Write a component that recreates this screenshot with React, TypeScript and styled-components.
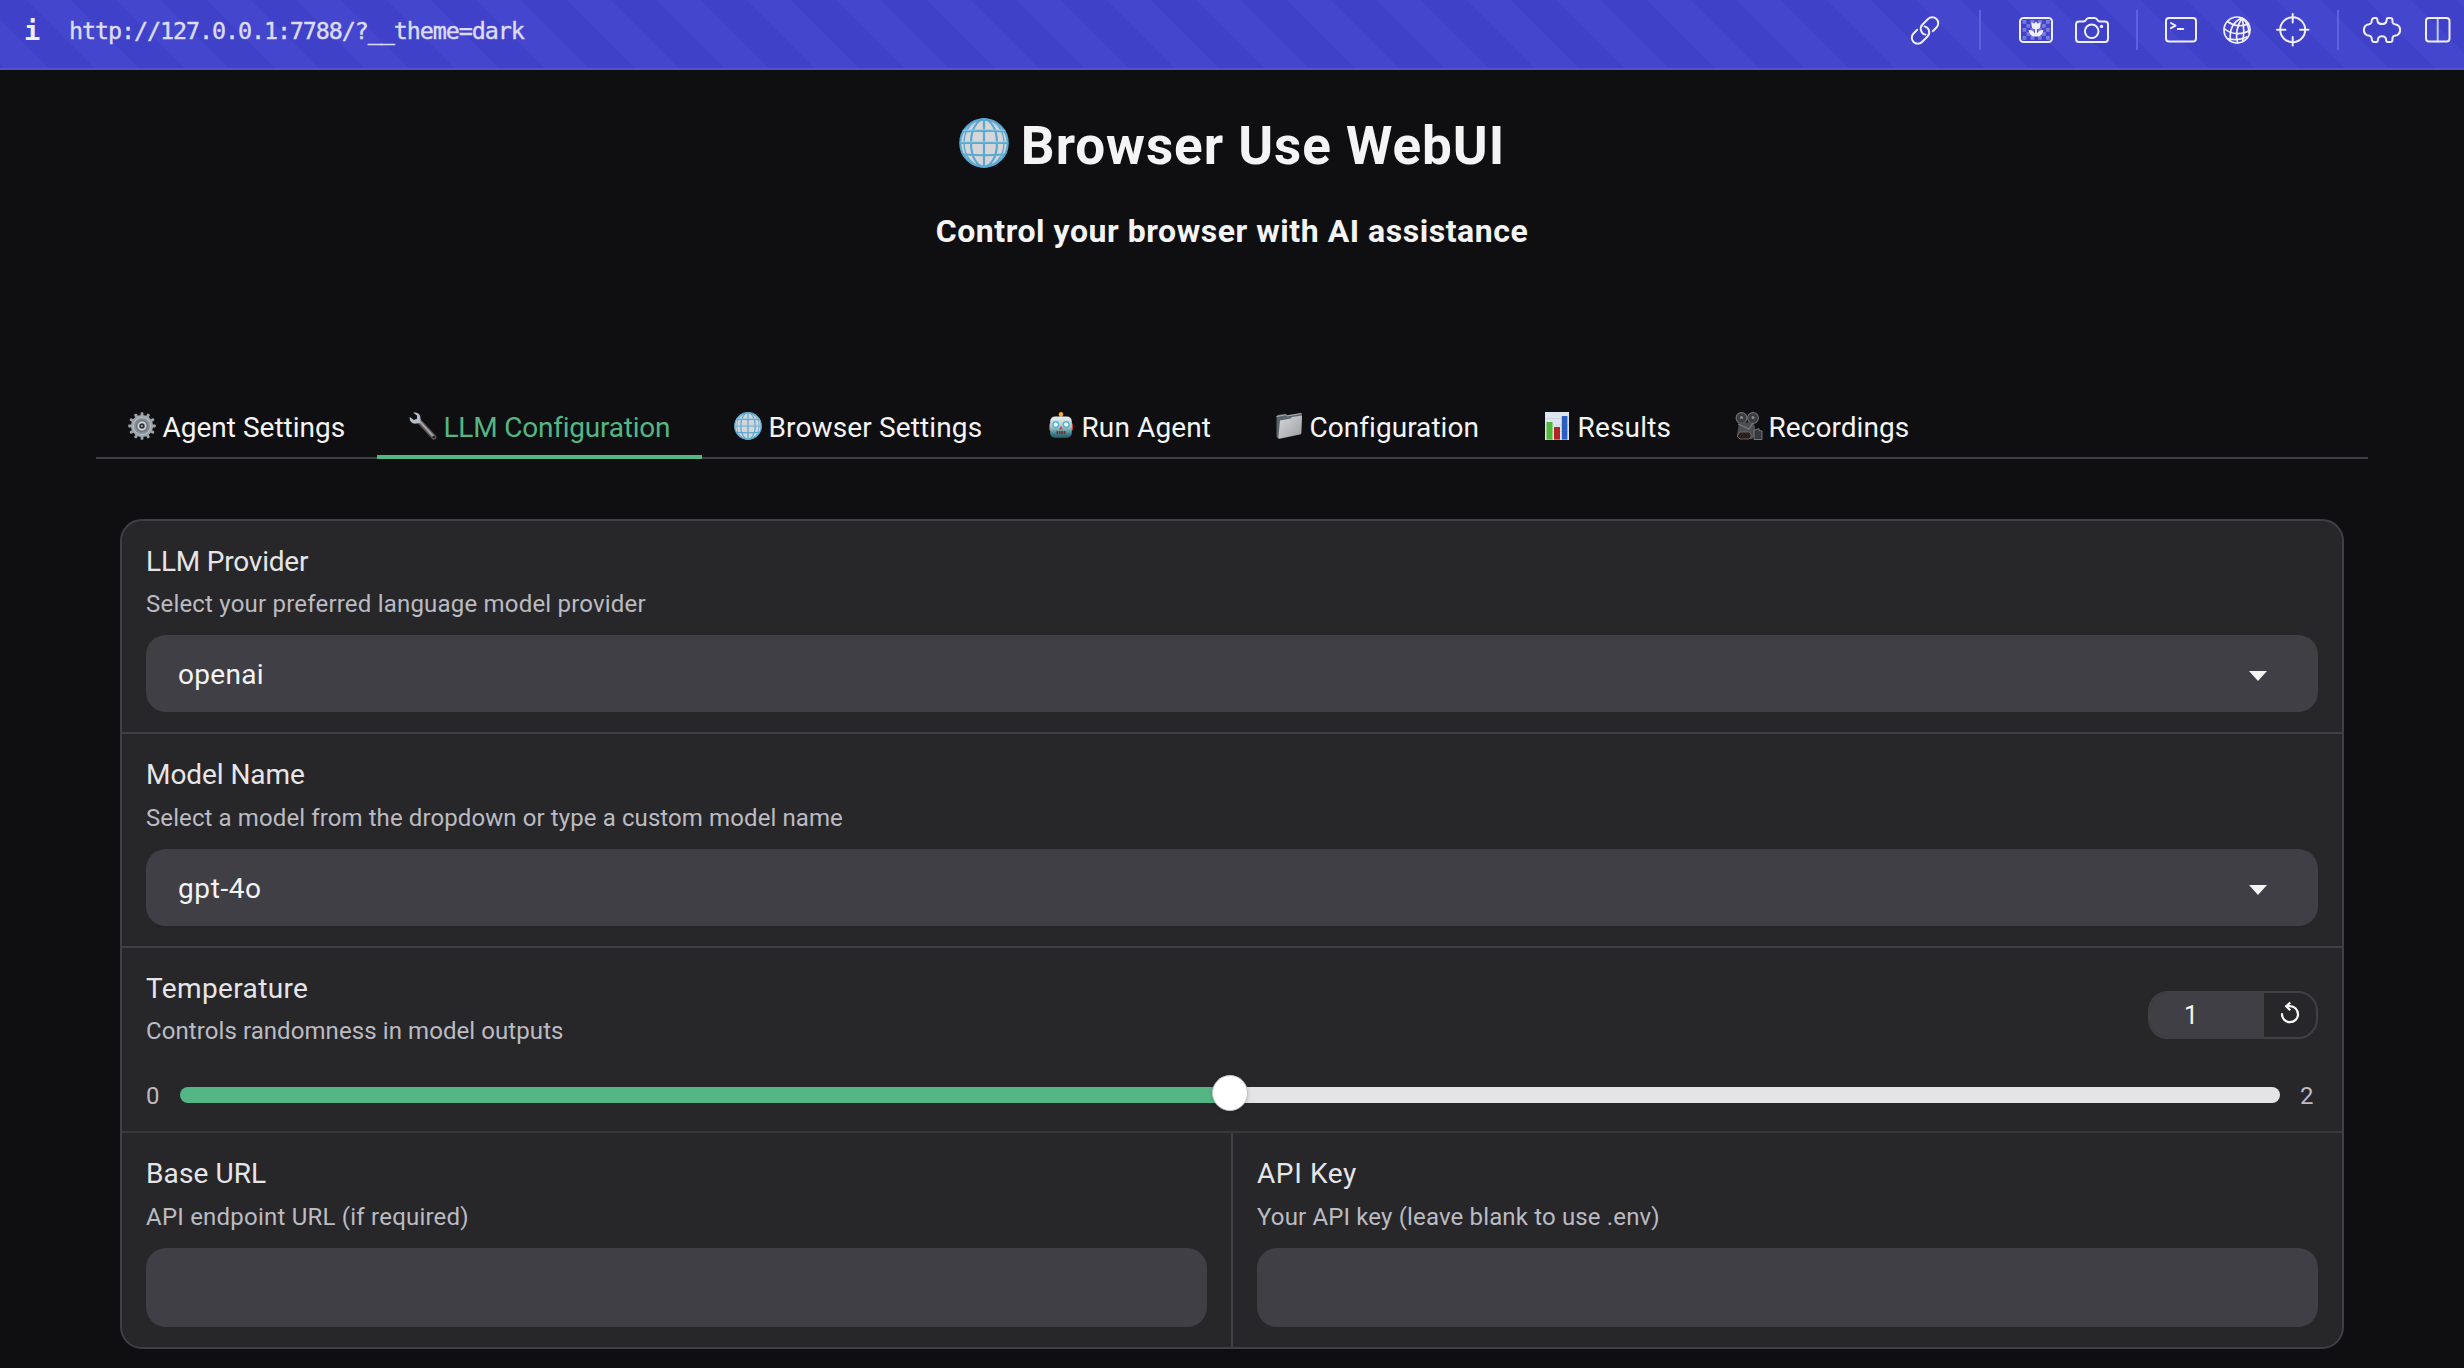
import React from 'react';
import styled, { createGlobalStyle, css } from 'styled-components';

const GlobalStyle = createGlobalStyle`
  *, *::before, *::after { box-sizing: border-box; }
  html, body { margin: 0; background: #0f0f11; }
  body { font-family: Roboto, 'Liberation Sans', sans-serif; color: #f4f4f5; overflow: hidden; }
  svg { display: block; flex: none; overflow: visible; }
`;

/* ---------- address bar ---------- */

const AddressBar = styled.header`
  display: flex;
  align-items: flex-start;
  height: 70px;
  padding: 0 13px 0 24px;
  border-bottom: 2px solid #5351d0;
  background: repeating-linear-gradient(
    45deg,
    #3f41c8 0 3.5px,
    #4447cd 3.5px 34px,
    #3f41c8 34px 63.64px
  );
  background-clip: padding-box;
`;

const InfoMark = styled.span`
  width: 16px;
  font: 700 27px/40px 'DejaVu Sans Mono', monospace;
  padding-top: 11px;
  color: #eeeefc;
`;

const Url = styled.span`
  flex: 1;
  padding: 11px 0 0 29px;
  font: 400 23.4px/40px 'DejaVu Sans Mono', monospace;
  letter-spacing: -1.09px;
  color: #dcdcf7;
  -webkit-text-stroke: 0.4px #dcdcf7;
`;

const ToolIcon = styled.svg<{ $gap: number }>`
  margin-left: ${(p) => p.$gap}px;
  height: 60px;
  fill: none;
  stroke: #eeeefc;
  stroke-width: 2;
  stroke-linecap: round;
  stroke-linejoin: round;
`;

const Separator = styled.span<{ $gap: number }>`
  width: 2px;
  height: 40px;
  margin: 10px 0 0 ${(p) => p.$gap}px;
  background: #5f60e2;
`;

/* ---------- heading ---------- */

const Hero = styled.section`
  display: flex;
  flex-direction: column;
  align-items: center;
  height: 322px;
  padding-top: 44px;
`;

const Title = styled.h1`
  display: flex;
  align-items: center;
  gap: 12px;
  margin: 0;
  font-size: 53px;
  line-height: 64px;
  font-weight: 700;
  letter-spacing: 0.95px;
`;

const TitleGlobe = styled.span`
  height: 64px;
  padding-top: 4px;
`;

const Subtitle = styled.h3`
  margin: 33px 0 0;
  font-size: 32px;
  line-height: 40px;
  font-weight: 700;
  letter-spacing: 0.54px;
`;

/* ---------- tabs ---------- */

const Tabs = styled.nav`
  display: flex;
  height: 67px;
  margin: 0 96px 60px;
  border-bottom: 2px solid #3f3f46;
`;

const Tab = styled.button<{ $width: number; $spacing: number; $active?: boolean }>`
  display: flex;
  align-items: flex-start;
  gap: 6.5px;
  width: ${(p) => p.$width}px;
  height: 67px;
  padding: 18px 0 0 32px;
  border: 0;
  background: none;
  font: inherit;
  font-size: 28px;
  line-height: 36px;
  letter-spacing: ${(p) => p.$spacing}px;
  white-space: nowrap;
  color: #f4f4f5;
  ${(p) =>
    p.$active &&
    css`
      color: #54b685;
      box-shadow: inset 0 -4px 0 #54b685;
    `}
`;

const Emoji = styled.span`
  width: 28px;
  padding-top: 2px;
`;

/* ---------- form ---------- */

const Form = styled.main`
  margin: 0 120px;
  border: 2px solid #3f3f46;
  border-radius: 22px;
  background: #27272a;
  overflow: hidden;
`;

const Block = styled.section<{ $height: number; $line?: string }>`
  height: ${(p) => p.$height}px;
  padding: 23px 24px 20px;
  border-bottom: ${(p) => (p.$line ? `2px solid ${p.$line}` : '0')};
`;

const Split = styled.div`
  display: grid;
  grid-template-columns: 1111px 1fr;

  & > :first-child {
    border-right: 2px solid #3f3f46;
  }
`;

const Label = styled.div<{ $spacing: number }>`
  font-size: 28px;
  line-height: 36px;
  letter-spacing: ${(p) => p.$spacing}px;
  color: #e6e6e9;
`;

const Hint = styled.div<{ $spacing: number; $tight?: boolean }>`
  margin-top: ${(p) => (p.$tight ? 8 : 9)}px;
  font-size: 24px;
  line-height: 32px;
  letter-spacing: ${(p) => p.$spacing}px;
  color: #bbbbc2;
`;

const Select = styled.div<{ $spacing: number }>`
  display: flex;
  align-items: center;
  justify-content: space-between;
  height: 77px;
  margin-top: 15px;
  padding: 2px 51px 0 32px;
  border-radius: 20px;
  background: #403f46;
  font-size: 28px;
  line-height: 36px;
  letter-spacing: ${(p) => p.$spacing}px;
  color: #f4f4f5;
`;

const TextInput = styled.div`
  height: 79px;
  margin-top: 15px;
  border-radius: 20px;
  background: #403f46;
`;

const SliderHead = styled.div`
  display: flex;
  justify-content: space-between;
  height: 76px;
`;

const NumberBox = styled.div`
  display: flex;
  width: 170px;
  height: 48px;
  margin-top: 20px;
  border: 2px solid #403f46;
  border-radius: 20px;
  overflow: hidden;
`;

const NumberValue = styled.span`
  width: 114px;
  padding-left: 34px;
  background: #403f46;
  font-size: 25px;
  line-height: 46px;
  color: #f8f8f9;
`;

const ResetButton = styled.span`
  display: flex;
  flex: 1;
  padding: 8px 0 0 16px;
`;

const SliderRow = styled.div`
  display: flex;
  align-items: center;
  height: 32px;
  margin-top: 32px;
  font-size: 24px;
  line-height: 32px;
  color: #bbbbc2;
`;

const Bound = styled.span<{ $width: number }>`
  width: ${(p) => p.$width}px;
  padding-top: 1px;
`;

const Track = styled.div<{ $percent: number }>`
  position: relative;
  flex: 1;
  height: 16px;
  margin-right: 20px;
  border-radius: 8px;
  background: linear-gradient(to right, #54b685 ${(p) => p.$percent}%, #e4e4e7 ${(p) => p.$percent}%);
`;

const Thumb = styled.span<{ $percent: number }>`
  position: absolute;
  left: calc(${(p) => p.$percent}% - 18px);
  top: -12px;
  width: 36px;
  height: 36px;
  border: 1.5px solid #c4c4c7;
  border-radius: 50%;
  background: #fff;
  box-shadow: 0 1px 4px rgba(0, 0, 0, 0.18);
`;

/* ---------- drawings ---------- */

const Globe = ({ size }: { size: number }) => (
  <svg width={size} height={size} viewBox="0 0 50 50">
    <circle cx="25" cy="25" r="24" fill="#d6d6d8" />
    <g fill="none" stroke="#5aa9d3" strokeWidth="2.2">
      <circle cx="25" cy="25" r="23.7" />
      <ellipse cx="25" cy="25" rx="13" ry="23.7" />
      <ellipse cx="25" cy="25" rx="20" ry="24" strokeWidth="1.4" />
      <path d="M25 1v48M1 25h48M4.5 13.5Q25 12 45.5 13.5M4.5 36.5Q25 38 45.5 36.5" />
    </g>
    <path d="M3.5 12.4Q25 10.8 46.5 12.4M1.5 23.8h47" fill="none" stroke="#8fd0ee" strokeWidth=".9" />
  </svg>
);

const Gear = () => (
  <svg width="28" height="28" viewBox="0 0 28 28">
    <g fill="#9da5ad">
      {[0, 30, 60, 90, 120, 150].map((a) => (
        <rect key={a} x="12.6" y="0.2" width="2.8" height="27.6" rx=".8" transform={`rotate(${a} 14 14)`} />
      ))}
      <circle cx="14" cy="14" r="11" />
    </g>
    <circle cx="14" cy="14" r="8.6" fill="#878f97" stroke="#c3c9ce" strokeWidth=".8" />
    <circle cx="14" cy="14" r="6" fill="#6d757d" />
    <circle cx="14" cy="14" r="3.6" fill="#2c3035" stroke="#d5dade" strokeWidth="1.7" />
    <circle cx="14" cy="14" r="1" fill="#aab1b8" />
  </svg>
);

const Wrench = () => (
  <svg width="28" height="28" viewBox="0 0 28 28">
    <path d="M9.5 8.5L25 25.2" stroke="#5d5558" strokeWidth="5" strokeLinecap="round" />
    <path d="M9.5 8L24.6 24.6" stroke="#a8a3a7" strokeWidth="2" strokeLinecap="round" />
    <path
      d="M4.2.8C8-.6 12 2.5 11.5 7l-.6 4-3.6.6C3.6 12.3-.2 9 .8 5l4 3L8 6.8 8 3.5z"
      fill="#b4bfcc"
    />
    <circle cx="24.7" cy="25" r="1.3" fill="#221e20" />
  </svg>
);

const Robot = () => (
  <svg width="28" height="28" viewBox="0 0 28 28">
    <defs>
      <linearGradient id="robotFace" x1="0" y1="0" x2="0" y2="1">
        <stop offset="0" stopColor="#e4f0ee" />
        <stop offset=".45" stopColor="#b5d2d3" />
        <stop offset=".75" stopColor="#4e8d97" />
        <stop offset="1" stopColor="#1f535e" />
      </linearGradient>
    </defs>
    <rect x="2" y="11" width="24" height="8" rx="2" fill="#c9433b" />
    <path d="M14 5v-2" stroke="#a0402e" strokeWidth="3" />
    <circle cx="14" cy="2.2" r="2.2" fill="#f5ad3c" />
    <rect x="3.2" y="4.4" width="21.6" height="21.6" rx="5" fill="url(#robotFace)" />
    <g fill="#fff" stroke="#4db5d2" strokeWidth="1.5">
      <circle cx="8.8" cy="12.6" r="2.9" />
      <circle cx="19.2" cy="12.6" r="2.9" />
    </g>
    <path d="M14 13.5l2 4h-4z" fill="#d9493d" />
    <path d="M9.5 20.5h9" stroke="#6e2c2c" strokeWidth="3" strokeDasharray="1.6 .8" />
  </svg>
);

const Folder = () => (
  <svg width="28" height="28" viewBox="0 0 28 28">
    <defs>
      <linearGradient id="folderFront" x1="0" y1="0" x2="1" y2="1">
        <stop offset="0" stopColor="#d7d9dc" />
        <stop offset="1" stopColor="#9a9da1" />
      </linearGradient>
    </defs>
    <path d="M1.5 4.5l1-1.5 8-1.2 1.5 1.4L26 1l1 2-1 14L3 26.5 1.5 25z" fill="#596269" />
    <path d="M1.5 4.5l9-1.7 1.5 1.2L26.5 1.5" fill="none" stroke="#aab2b8" strokeWidth="1" />
    <path d="M5 8.5l10.5-2 1.5-1.5 10-1.6-.6 17.4q0 1.5-1.5 1.8L4.5 26.8q-1.3.2-1.2-1z" fill="url(#folderFront)" />
  </svg>
);

const Chart = () => (
  <svg width="28" height="28" viewBox="0 0 28 28">
    <rect x="2" y="0" width="24" height="28" fill="#dde6ee" />
    <path d="M2 6.5h24M2 13h24M2 19.5h24" stroke="#c4d0db" strokeWidth=".7" />
    <rect x="3.5" y="10" width="6" height="17.6" fill="#50b83a" />
    <rect x="11" y="15" width="6" height="12.6" fill="#b32623" />
    <rect x="18.8" y="4" width="5.6" height="23.6" fill="#2a5fc0" />
  </svg>
);

const MovieCamera = () => (
  <svg width="28" height="28" viewBox="0 0 28 28">
    <g fill="#3a3c3f" stroke="#707377" strokeWidth="1.1">
      <circle cx="7.5" cy="6" r="5.4" />
      <circle cx="19" cy="6" r="5.4" />
    </g>
    <g fill="#8a8d91">
      <circle cx="7.5" cy="5.5" r="1.5" />
      <circle cx="19" cy="5.5" r="1.5" />
    </g>
    <path d="M5 10.5h14l2 4v9l-3 3.5H6l-3-4 1-6z" fill="#4b4e52" />
    <path d="M4 12l11 5 4-6" fill="none" stroke="#777b80" strokeWidth="1.2" />
    <path d="M6 20h9l2 2v3l-2 2H6l-3-3z" fill="#2a211f" stroke="#7a706c" strokeWidth=".8" />
    <path d="M20 18.5l5-2v2l3 .5v8.5h-8z" fill="#36383b" stroke="#7c7f83" strokeWidth=".9" />
  </svg>
);

const CaretShape = styled.svg`
  margin-top: 3px;
`;

const Caret = () => (
  <CaretShape width="18" height="10" viewBox="0 0 18 10">
    <path d="M0 0h18L9 10z" fill="#f4f4f5" />
  </CaretShape>
);

const ResetIcon = () => (
  <svg width="20" height="24" viewBox="0 0 20 24" fill="none" stroke="#fafafa" strokeWidth="2.2">
    <path d="M2 13.2A8 8 0 1 0 10 5.2H6.5" strokeLinecap="round" />
    <path d="M10.3 1.5L6.2 5.3l4.1 4" strokeLinejoin="miter" />
  </svg>
);

const Toolbar = () => (
  <>
    <ToolIcon $gap={0} width="30" viewBox="0 0 30 60">
      <g transform="translate(0 15.5) rotate(-45 15 15)">
        <path d="M10 9H4.8A6 6 0 0 0 4.8 21H12.5A6 6 0 0 0 17.6 11.8" />
        <path d="M20 21H25.2A6 6 0 0 0 25.2 9H17.5A6 6 0 0 0 12.4 18.2" />
      </g>
    </ToolIcon>
    <Separator $gap={39} />
    <ToolIcon $gap={38} width="34" viewBox="0 0 34 60">
      <g fill="#9a9bea" stroke="none" fillOpacity=".62">
        {[21, 25, 29, 33, 37].map((y, r) =>
          (r % 2 ? [7.5, 23] : [3.5, 11.5, 19, 27]).map((x) => (
            <rect key={`${x}-${y}`} x={x} y={y - 1} width="3.8" height="3.8" />
          )),
        )}
      </g>
      <rect x="1" y="18" width="32" height="24" rx="3.5" />
      <path
        d="M12.5 22l2.6 1.8L17 21.500l1.900 2.300 2.600-1.800v4q0 2.800-3.500 3.200v4.300q1.500-3.700 6.500-3.500-1 5.500-5 6.500h-5q-4-1-5-6.500 5-.2 6.500 3.500v-4.300q-3.500-.4-3.500-3.200z"
        fill="#eeeefc"
        stroke="none"
      />
    </ToolIcon>
    <ToolIcon $gap={22} width="34" viewBox="0 0 34 60">
      <path d="M4 21.5h4.500q1.500 0 2.400-1.500 1-2 3-2h5.600q2 0 3 2 .9 1.500 2.400 1.500H30q3 0 3 3V39q0 3-3 3H4q-3 0-3-3V24.500q0-3 3-3z" />
      <circle cx="16.7" cy="31.3" r="6.8" />
      <circle cx="26.5" cy="26.4" r="1.7" fill="#eeeefc" stroke="none" />
    </ToolIcon>
    <Separator $gap={27} />
    <ToolIcon $gap={27} width="32" viewBox="0 0 32 60">
      <rect x="1" y="18" width="30" height="23.5" rx="3" />
      <path d="M6 23l4.5 2.6L6 28.2M12.8 29h5.4" />
    </ToolIcon>
    <ToolIcon $gap={26} width="28" viewBox="0 0 28 60">
      <g strokeWidth="1.7">
        <circle cx="14" cy="30" r="13" />
        <path d="M19 17.8C10 22 6 30 7.5 41M19 17.8C14 26 12.5 35 14.5 43M19 17.8C21 26 21.5 34 19.5 41.5M19 17.8C24 22 26 27 26 33" />
        <path d="M4.5 21.5C11 26.5 20 27 25.5 23.5M1.2 28.5C8 35 20 35 26.8 30M4.5 38.5C11 40.5 18 39.5 24 37" />
      </g>
    </ToolIcon>
    <ToolIcon $gap={25} width="34" viewBox="0 0 34 60">
      <circle cx="16.7" cy="29.7" r="12.5" />
      <path d="M16.7 14v8.5M16.7 37v8.5M1 29.7h8.5M24 29.7h8.5" />
    </ToolIcon>
    <Separator $gap={27} />
    <ToolIcon $gap={24} width="38" viewBox="0 0 38 60">
      <path
        transform="translate(0 17)"
        d="M11.5 1H13C15 1 14 3.5 14.8 5 16 7.8 22 7.8 23.2 5 24 3.5 23 1 25 1H27.5C30 1 29.5 3.5 29.5 5.5 30.5 8 33 7 34.5 8 38 10 38 16 34.5 18 33 19 30.5 18 29.5 20.5 29.5 22.5 30 25 27.5 25H24.5C22.5 25 23.5 22.5 22.5 20.8 21.3 18.8 16.7 18.8 15.5 20.8 14.5 22.5 15.5 25 13.5 25H11C8.5 25 9 22.5 8.5 20.5 7.5 18 5 19 3.5 18 0 16 0 10 3.5 8 5 7 7.5 8 8.5 5.5 8.5 3.5 8.5 1 11.5 1z"
      />
    </ToolIcon>
    <ToolIcon $gap={24} width="26" viewBox="0 0 26 60">
      <rect x="1" y="18" width="23.5" height="23.5" rx="3" />
      <path d="M12.7 18v23.5" strokeOpacity=".75" />
    </ToolIcon>
  </>
);

const tabs = [
  { text: 'Agent Settings', icon: <Gear />, width: 281, spacing: 0 },
  { text: 'LLM Configuration', icon: <Wrench />, width: 325, spacing: -0.22, active: true },
  { text: 'Browser Settings', icon: <Globe size={28} />, width: 313, spacing: 0.13 },
  { text: 'Run Agent', icon: <Robot />, width: 228, spacing: 0.12 },
  { text: 'Configuration', icon: <Folder />, width: 268, spacing: 0.04 },
  { text: 'Results', icon: <Chart />, width: 191, spacing: 0.18 },
  { text: 'Recordings', icon: <MovieCamera />, width: 238, spacing: 0.06 },
];

export default function App() {
  return (
    <>
      <GlobalStyle />
      <AddressBar>
        <InfoMark>i</InfoMark>
        <Url>http://127.0.0.1:7788/?__theme=dark</Url>
        <Toolbar />
      </AddressBar>

      <Hero>
        <Title>
          <TitleGlobe>
            <Globe size={50} />
          </TitleGlobe>
          Browser Use WebUI
        </Title>
        <Subtitle>Control your browser with AI assistance</Subtitle>
      </Hero>

      <Tabs>
        {tabs.map((t) => (
          <Tab key={t.text} $width={t.width} $spacing={t.spacing} $active={t.active}>
            <Emoji>{t.icon}</Emoji>
            {t.text}
          </Tab>
        ))}
      </Tabs>

      <Form>
        <Block $height={213} $line="#3f3f46">
          <Label $spacing={-0.2}>LLM Provider</Label>
          <Hint $spacing={0.2} $tight>Select your preferred language model provider</Hint>
          <Select $spacing={0.3}>
            openai
            <Caret />
          </Select>
        </Block>
        <Block $height={214} $line="#3f3f46">
          <Label $spacing={-0.06}>Model Name</Label>
          <Hint $spacing={0.1}>Select a model from the dropdown or type a custom model name</Hint>
          <Select $spacing={0.6}>
            gpt-4o
            <Caret />
          </Select>
        </Block>
        <Block $height={185} $line="#38383b">
          <SliderHead>
            <div>
              <Label $spacing={0.38}>Temperature</Label>
              <Hint $spacing={0.08} $tight>Controls randomness in model outputs</Hint>
            </div>
            <NumberBox>
              <NumberValue>1</NumberValue>
              <ResetButton>
                <ResetIcon />
              </ResetButton>
            </NumberBox>
          </SliderHead>
          <SliderRow>
            <Bound $width={34}>0</Bound>
            <Track $percent={50}>
              <Thumb $percent={50} />
            </Track>
            <Bound $width={18}>2</Bound>
          </SliderRow>
        </Block>
        <Split>
          <Block $height={214}>
            <Label $spacing={0.1}>Base URL</Label>
            <Hint $spacing={0.22}>API endpoint URL (if required)</Hint>
            <TextInput />
          </Block>
          <Block $height={214}>
            <Label $spacing={0.6}>API Key</Label>
            <Hint $spacing={0.15}>Your API key (leave blank to use .env)</Hint>
            <TextInput />
          </Block>
        </Split>
      </Form>
    </>
  );
}
